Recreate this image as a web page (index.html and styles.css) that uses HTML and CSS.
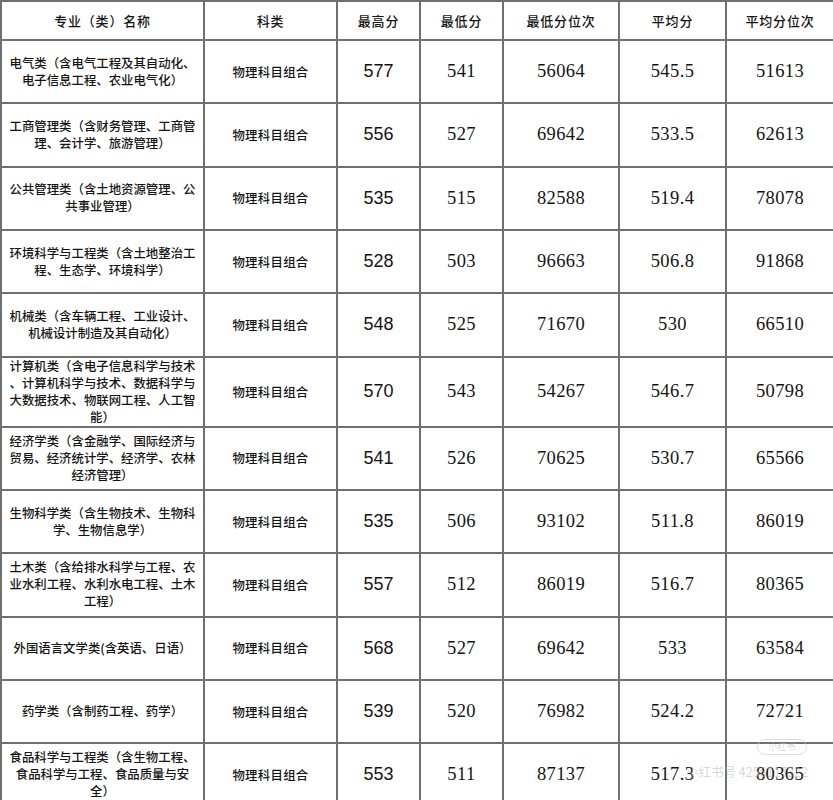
FILE: index.html
```html
<!DOCTYPE html>
<html lang="zh">
<head>
<meta charset="utf-8">
<link rel="stylesheet" href="styles.css">
</head>
<body>
<div class="page">
<table class="grid">
  <colgroup>
    <col class="c1"><col class="c2"><col class="c3"><col class="c4"><col class="c5"><col class="c6"><col class="c7">
  </colgroup>
  <thead>
    <tr class="head">
      <th>专业（类）名称</th><th>科类</th><th>最高分</th><th>最低分</th><th>最低分位次</th><th>平均分</th><th>平均分位次</th>
    </tr>
  </thead>
  <tbody>
    <tr><td class="name">电气类（含电气工程及其自动化、<br>电子信息工程、农业电气化）</td><td class="kind">物理科目组合</td><td class="hi">577</td><td class="num">541</td><td class="num">56064</td><td class="num">545.5</td><td class="num">51613</td></tr>
    <tr><td class="name">工商管理类（含财务管理、工商管<br>理、会计学、旅游管理）</td><td class="kind">物理科目组合</td><td class="hi">556</td><td class="num">527</td><td class="num">69642</td><td class="num">533.5</td><td class="num">62613</td></tr>
    <tr><td class="name">公共管理类（含土地资源管理、公<br>共事业管理）</td><td class="kind">物理科目组合</td><td class="hi">535</td><td class="num">515</td><td class="num">82588</td><td class="num">519.4</td><td class="num">78078</td></tr>
    <tr><td class="name">环境科学与工程类（含土地整治工<br>程、生态学、环境科学）</td><td class="kind">物理科目组合</td><td class="hi">528</td><td class="num">503</td><td class="num">96663</td><td class="num">506.8</td><td class="num">91868</td></tr>
    <tr><td class="name">机械类（含车辆工程、工业设计、<br>机械设计制造及其自动化）</td><td class="kind">物理科目组合</td><td class="hi">548</td><td class="num">525</td><td class="num">71670</td><td class="num">530</td><td class="num">66510</td></tr>
    <tr><td class="name">计算机类（含电子信息科学与技术<br>、计算机科学与技术、数据科学与<br>大数据技术、物联网工程、人工智<br>能）</td><td class="kind">物理科目组合</td><td class="hi">570</td><td class="num">543</td><td class="num">54267</td><td class="num">546.7</td><td class="num">50798</td></tr>
    <tr><td class="name">经济学类（含金融学、国际经济与<br>贸易、经济统计学、经济学、农林<br>经济管理）</td><td class="kind">物理科目组合</td><td class="hi">541</td><td class="num">526</td><td class="num">70625</td><td class="num">530.7</td><td class="num">65566</td></tr>
    <tr><td class="name">生物科学类（含生物技术、生物科<br>学、生物信息学）</td><td class="kind">物理科目组合</td><td class="hi">535</td><td class="num">506</td><td class="num">93102</td><td class="num">511.8</td><td class="num">86019</td></tr>
    <tr><td class="name">土木类（含给排水科学与工程、农<br>业水利工程、水利水电工程、土木<br>工程）</td><td class="kind">物理科目组合</td><td class="hi">557</td><td class="num">512</td><td class="num">86019</td><td class="num">516.7</td><td class="num">80365</td></tr>
    <tr><td class="name">外国语言文学类(含英语、日语）</td><td class="kind">物理科目组合</td><td class="hi">568</td><td class="num">527</td><td class="num">69642</td><td class="num">533</td><td class="num">63584</td></tr>
    <tr><td class="name">药学类（含制药工程、药学）</td><td class="kind">物理科目组合</td><td class="hi">539</td><td class="num">520</td><td class="num">76982</td><td class="num">524.2</td><td class="num">72721</td></tr>
    <tr><td class="name">食品科学与工程类（含生物工程、<br>食品科学与工程、食品质量与安<br>全）</td><td class="kind">物理科目组合</td><td class="hi">553</td><td class="num">511</td><td class="num">87137</td><td class="num">517.3</td><td class="num">80365</td></tr>
  </tbody>
</table>
<span class="mark-logo">小红书</span>
<span class="mark-id">小红书号 4256117322</span>
</div>
</body>
</html>
```
FILE: styles.css
```css
html, body {
  margin: 0;
  padding: 0;
  background: #ffffff;
}
.page {
  position: relative;
  width: 833px;
  height: 800px;
  overflow: hidden;
}
.grid {
  border-collapse: collapse;
  table-layout: fixed;
  width: 833px;
  color: #141414;
  font-family: "Noto Sans CJK SC", "Liberation Serif", serif;
}
.c1 { width: 203px; }
.c2 { width: 133px; }
.c3 { width: 83px; }
.c4 { width: 83px; }
.c5 { width: 116px; }
.c6 { width: 107px; }
.c7 { width: 108px; }
.grid th, .grid td {
  border: 2px solid #707070;
  text-align: center;
  vertical-align: middle;
  padding: 0 4px;
}
.head th {
  height: 37px;
  font-size: 13px;
  font-weight: 500;
  letter-spacing: 0.8px;
}
.grid tbody tr {
  height: 63.33px;
}
.name {
  font-size: 12.4px;
  font-weight: 500;
  line-height: 17px;
  white-space: nowrap;
}
.kind {
  font-size: 12.4px;
  font-weight: 500;
  letter-spacing: 0.3px;
}
.hi {
  font-family: "Liberation Sans", sans-serif;
  font-size: 18px;
}
.num {
  font-family: "Liberation Serif", serif;
  font-size: 18.5px;
  letter-spacing: 0.4px;
}
.mark-logo {
  position: absolute;
  left: 757px;
  top: 739px;
  width: 48px;
  height: 14px;
  line-height: 14px;
  text-align: center;
  font-family: "Noto Sans CJK SC", sans-serif;
  font-size: 9px;
  color: rgba(190, 190, 190, 0.6);
  border: 1.5px solid rgba(205, 205, 205, 0.65);
  border-radius: 8px;
}
.mark-id {
  position: absolute;
  left: 686px;
  top: 764px;
  line-height: 16px;
  font-family: "Noto Sans CJK SC", sans-serif;
  font-size: 12.5px;
  color: rgba(175, 175, 175, 0.5);
  white-space: nowrap;
}
```
